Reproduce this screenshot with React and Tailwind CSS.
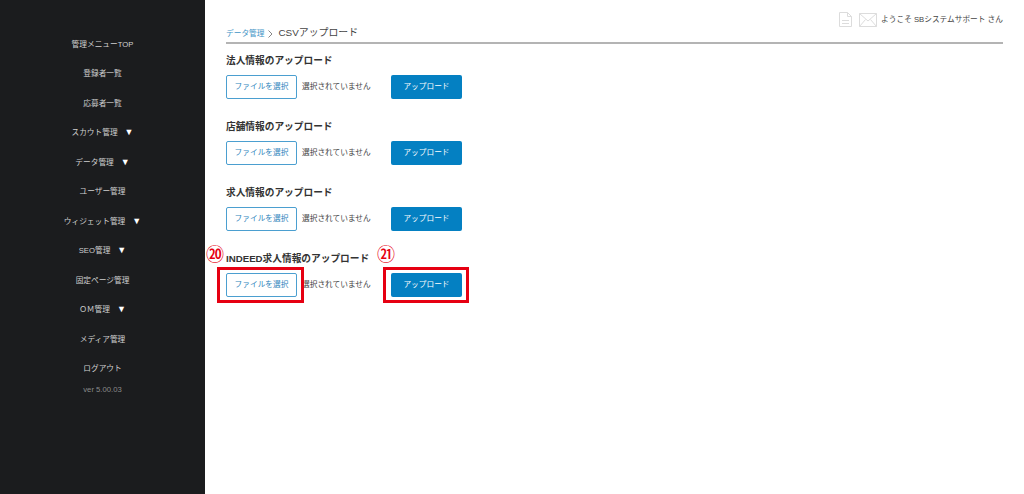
const FONT = '"Liberation Sans", "Noto Sans CJK JP", sans-serif';

const menu = [
  { label: '管理メニューTOP' },
  { label: '登録者一覧' },
  { label: '応募者一覧' },
  { label: 'スカウト管理', arrow: true },
  { label: 'データ管理', arrow: true },
  { label: 'ユーザー管理' },
  { label: 'ウィジェット管理', arrow: true },
  { label: 'SEO管理', arrow: true },
  { label: '固定ページ管理' },
  { label: 'ＯＭ管理', arrow: true },
  { label: 'メディア管理' },
  { label: 'ログアウト' },
];

const sections = [
  { title: '法人情報のアップロード' },
  { title: '店舗情報のアップロード' },
  { title: '求人情報のアップロード' },
  { title: 'INDEED求人情報のアップロード', marked: true },
];

function UploadRow({ title, marked }) {
  return (
    <section className="h-[66px]">
      <h2 className="h-[17px] text-[9.7px] leading-[17px] font-bold text-[#333]">{title}</h2>
      <div className="mt-[6px] flex items-center">
        <div className="relative">
          <button className="block h-[24px] w-[71px] rounded-[2px] border border-[#4b9fd0] bg-white text-[7.7px] text-[#2f86bd]">
            ファイルを選択
          </button>
          {marked && (
            <>
              <span className="absolute left-[-20px] top-[-28px] text-[18px] leading-[20px] font-medium text-[#e60012]">⑳</span>
              <span className="absolute left-[-9px] top-[-6px] h-[36px] w-[87px] border-[3px] border-[#e60012]" />
            </>
          )}
        </div>
        <span className="ml-[5px] w-[89px] text-[7.7px] text-[#444]">選択されていません</span>
        <div className="relative">
          <button className="block h-[24px] w-[71px] rounded-[2px] bg-[#0480c2] text-[7.7px] text-white">アップロード</button>
          {marked && (
            <>
              <span className="absolute left-[-14px] top-[-28px] text-[18px] leading-[20px] font-medium text-[#e60012]">㉑</span>
              <span className="absolute left-[-8px] top-[-6px] h-[36px] w-[86px] border-[3px] border-[#e60012]" />
            </>
          )}
        </div>
      </div>
    </section>
  );
}

export default function App() {
  return (
    <div className="flex h-[494px] w-[1024px] overflow-hidden bg-white" style={{ fontFamily: FONT }}>
      <nav className="w-[205px] shrink-0 bg-[#1b1c1e] pt-[29.5px] text-center">
        <ul>
          {menu.map((item) => (
            <li key={item.label} className="h-[29.5px] text-[7.7px] leading-[30px] text-[#d0d0d0]">
              {item.label}
              {item.arrow && <span className="ml-[7px] text-[9px] leading-none text-white">▼</span>}
            </li>
          ))}
        </ul>
        <p className="text-[7.7px] leading-[12px] text-[#8a8a8a]">ver 5.00.03</p>
      </nav>

      <main className="flex-1 pl-[21px] pr-[21px]">
        <div className="flex h-[27px] items-end justify-end">
          <div className="flex items-center">
            <svg width="13" height="15" viewBox="0 0 13 15" fill="none" stroke="#dcdcdc" className="mr-[7px]">
              <path d="M.5.5h8l4 4v10H.500z" />
              <path d="M8.500.5v4h4M3 8.500h7M3 11.500h7" />
            </svg>
            <svg width="18" height="14" viewBox="0 0 18 14" fill="none" stroke="#dcdcdc" className="mr-[4px]">
              <path d="M.5.5h17v13H.500z" />
              <path d="M.5.5 9 8l8.500-7.500M.5 13.500 6.500 6.500M17.500 13.500l-6-7" />
            </svg>
            <span className="text-[7.7px] text-[#444]">ようこそ SBシステムサポート さん</span>
          </div>
        </div>
        <div className="flex h-[17px] items-center border-b-2 border-[#b4b4b4] pb-[2px]">
          <span className="text-[7.7px] text-[#3f94c6]">データ管理</span>
          <svg width="5" height="8" viewBox="0 0 5 8" fill="none" stroke="#888" className="ml-[4px]">
            <path d="M.5.5 4 4 .5 7.500" />
          </svg>
          <span className="ml-[5px] text-[9.9px] text-[#444]">CSVアップロード</span>
        </div>
        <div className="pt-[8px]">
          {sections.map((s) => (
            <UploadRow key={s.title} title={s.title} marked={s.marked} />
          ))}
        </div>
      </main>
    </div>
  );
}
